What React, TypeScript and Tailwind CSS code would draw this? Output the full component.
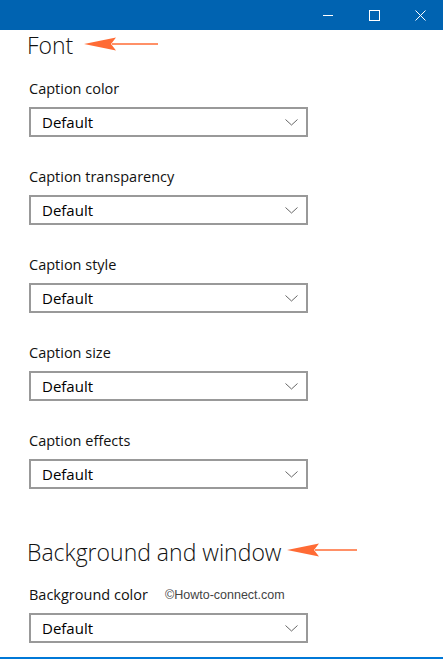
import React from 'react';

const captionRows = ['Caption color', 'Caption transparency', 'Caption style', 'Caption size', 'Caption effects'];

const Arrow: React.FC<{ className?: string; width?: number }> = ({ className, width = 75 }) => (
  <svg width={width} height="14" viewBox={`0 0 ${width} 14`} className={className}>
    <path d={`M${width} 6.2 H28 V7.8 H${width} Z`} fill="#FF6B35" />
    <path d="M0 7 L32 0.5 L27 7 L32 13.5 Z" fill="#FF6B35" />
  </svg>
);

const Dropdown: React.FC = () => (
  <div className="w-[279px] h-[30px] border-2 border-[#999999] bg-white flex items-center justify-between pl-[11px] pr-[8px]">
    <span className="text-[15px] text-black leading-none">Default</span>
    <svg width="13" height="7" viewBox="0 0 13 7" className="mt-[1px]">
      <path d="M0.5 0.5 L6.5 6 L12.5 0.5" fill="none" stroke="#666666" strokeWidth="1" />
    </svg>
  </div>
);

const App: React.FC = () => {
  return (
    <div
      className="w-[443px] h-[659px] bg-white overflow-hidden relative flex flex-col"
      style={{ fontFamily: '"Segoe UI", "Open Sans", sans-serif' }}
    >
      {/* title bar */}
      <div className="h-[30px] shrink-0 bg-[#0063B1] flex justify-end items-center">
        <div className="w-[46px] h-[30px] flex items-center justify-center">
          <div className="w-[10px] h-px bg-white" />
        </div>
        <div className="w-[46px] h-[30px] flex items-center justify-center">
          <div className="w-[11px] h-[11px] border border-white" />
        </div>
        <div className="w-[46px] h-[30px] flex items-center justify-center">
          <svg width="11" height="11" viewBox="0 0 11 11">
            <path d="M0.5 0.5 L10.5 10.5 M10.5 0.5 L0.5 10.5" stroke="white" strokeWidth="1" />
          </svg>
        </div>
      </div>

      <div className="pl-[29px] flex flex-col">
        <div className="h-[31px] flex items-center -ml-[2px]">
          <span className="text-[23px] font-light text-[#111] leading-none">Font</span>
          <Arrow className="ml-[11px] -mt-[4px]" width={74} />
        </div>

        <div className="mt-[18px] flex flex-col gap-[30px]">
          {captionRows.map(label => (
            <div key={label} className="flex flex-col gap-[8px]">
              <div className="h-[20px] flex items-center text-[14.5px] text-[#111]">{label}</div>
              <Dropdown />
            </div>
          ))}
        </div>

        <div className="mt-[47px] h-[32px] flex items-center -ml-[2px]">
          <span className="text-[23px] font-light text-[#111] leading-none">Background and window</span>
          <Arrow className="ml-[5px] -mt-[4px]" width={70} />
        </div>

        <div className="mt-[17px] flex flex-col gap-[8px]">
          <div className="h-[20px] flex items-center text-[14.5px] text-[#111]">
            <span className="w-[136px]">Background color</span>
            <span className="text-[12.5px] text-[#444]" style={{ fontFamily: '"Liberation Sans", Arial, sans-serif' }}>
              ©Howto-connect.com
            </span>
          </div>
          <Dropdown />
        </div>
      </div>

      <div className="absolute left-0 right-0 top-[657px] h-[2px] bg-[#0078D7]" />
    </div>
  );
};

export default App;
